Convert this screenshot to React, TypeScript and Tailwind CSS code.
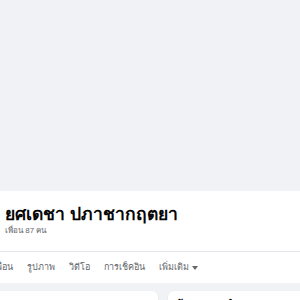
export default function App() {
  const tabs = ["เพื่อน", "รูปภาพ", "วิดีโอ", "การเช็คอิน"];
  return (
    <div className="w-[300px] h-[300px] overflow-hidden bg-[#f0f2f5] font-['Liberation_Sans',sans-serif]">
      <div className="h-[191px] bg-[#f0f2f5]" />
      <div className="bg-white">
        <div className="pl-[5px] pt-[11px] pb-[15px]">
          <div className="text-[17.5px] leading-[24px] font-bold text-[#050505] whitespace-nowrap">ยศเดชา ปภาชากฤตยา</div>
          <div className="text-[8px] leading-[10px] text-[#65676b] whitespace-nowrap">เพื่อน 87 คน</div>
        </div>
        <div className="h-px bg-[#e4e6eb]" />
        <div className="h-[31px] flex items-center gap-[14px] -ml-[7px] text-[9px] font-normal text-[#65676b] whitespace-nowrap">
          {tabs.map((t) => (
            <span key={t}>{t}</span>
          ))}
          <span className="flex items-center gap-[3px]">
            เพิ่มเติม
            <svg width="6" height="4" viewBox="0 0 6 4"><path d="M0 0h6L3 4z" fill="#65676b" /></svg>
          </span>
        </div>
      </div>
      <div className="flex gap-[10px] pt-[8px]">
        <div className="w-[158px] h-[40px] bg-white rounded-tr-[6px] shadow-[0_1px_2px_rgba(0,0,0,0.1)]" />
        <div className="flex-1 h-[40px] bg-white rounded-tl-[6px] shadow-[0_1px_2px_rgba(0,0,0,0.1)] pl-[7px] pt-[5px]">
          <div className="text-[11px] leading-[16px] font-bold text-[#050505] whitespace-nowrap">ข้อมูลแนะนำ</div>
        </div>
      </div>
    </div>
  );
}
